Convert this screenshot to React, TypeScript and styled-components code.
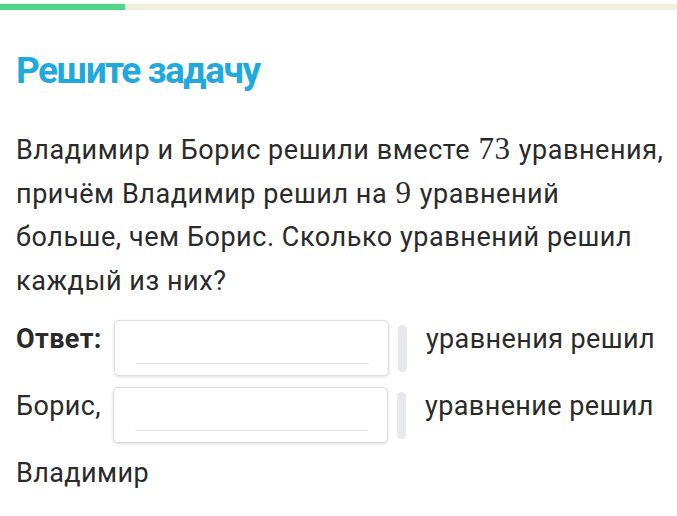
import React from "react";
import styled, { createGlobalStyle } from "styled-components";

const Global = createGlobalStyle`
  html, body { margin: 0; padding: 0; background: #ffffff; }
  body { font-family: Roboto, "Noto Sans", sans-serif; color: #2a2a2a; }
`;

const Page = styled.div`
  width: 677px;
  min-height: 516px;
  overflow: hidden;
`;

const Progress = styled.div`
  margin-top: 4px;
  height: 6px;
  background: #efeedc;
  display: flex;
`;

const ProgressFill = styled.div<{ $w: number }>`
  width: ${(p) => p.$w}px;
  background: #4fd68b;
`;

const Content = styled.div`
  padding: 0 16px;
`;

const Title = styled.h1`
  margin: 39px 0 0;
  font-family: Roboto, "Liberation Sans", sans-serif;
  font-weight: 700;
  font-size: 37px;
  letter-spacing: -1.5px;
  line-height: 44px;
  color: #1fa9de;
`;

const Problem = styled.p`
  margin: 36px 0 0;
  font-size: 27px;
  letter-spacing: 0.55px;
  line-height: 43.5px;
  white-space: nowrap;
`;

const Num = styled.span`
  font-family: "Liberation Serif", "DejaVu Serif", serif;
  font-size: 31px;
  line-height: 0;
  letter-spacing: 0.5px;
  margin: 0 1px;
`;

const Answer = styled.div`
  margin-top: 17px;
  display: flex;
  flex-wrap: wrap;
  align-items: flex-start;
  row-gap: 11px;
  width: 645px;
`;

const Label = styled.span<{ $bold?: boolean }>`
  font-size: 27px;
  letter-spacing: 0.4px;
  line-height: 38px;
  font-weight: ${(p) => (p.$bold ? 700 : 400)};
  white-space: nowrap;
`;

const Field = styled.div`
  display: flex;
  align-items: center;
  margin: 0 19px 0 12px;
`;

const Box = styled.div`
  position: relative;
  width: 273px;
  height: 54px;
  border: 1px solid #dddddd;
  border-radius: 5px;
  background: #fff;
  box-shadow: 0 1px 3px rgba(0, 0, 0, 0.14);
`;

const Underline = styled.div`
  position: absolute;
  left: 21px;
  right: 19px;
  top: 42px;
  height: 1px;
  background: #e3e3e3;
`;

const Pill = styled.div`
  width: 9px;
  height: 47px;
  margin-left: 9px;
  border-radius: 5px;
  background: #e6e8ed;
`;

const Input = () => (
  <Field>
    <Box>
      <Underline />
    </Box>
    <Pill />
  </Field>
);

export default function App() {
  return (
    <Page>
      <Global />
      <Progress>
        <ProgressFill $w={125} />
      </Progress>
      <Content>
        <Title>Решите задачу</Title>
        <Problem>
          Владимир и Борис решили вместе <Num>73</Num> уравнения,
          <br />
          причём Владимир решил на <Num>9</Num> уравнений
          <br />
          больше, чем Борис. Сколько уравнений решил
          <br />
          каждый из них?
        </Problem>
        <Answer>
          <Label $bold>Ответ:</Label>
          <Input />
          <Label>уравнения решил</Label>
          <Label>Борис,</Label>
          <Input />
          <Label>уравнение решил</Label>
          <Label>Владимир</Label>
        </Answer>
      </Content>
    </Page>
  );
}
